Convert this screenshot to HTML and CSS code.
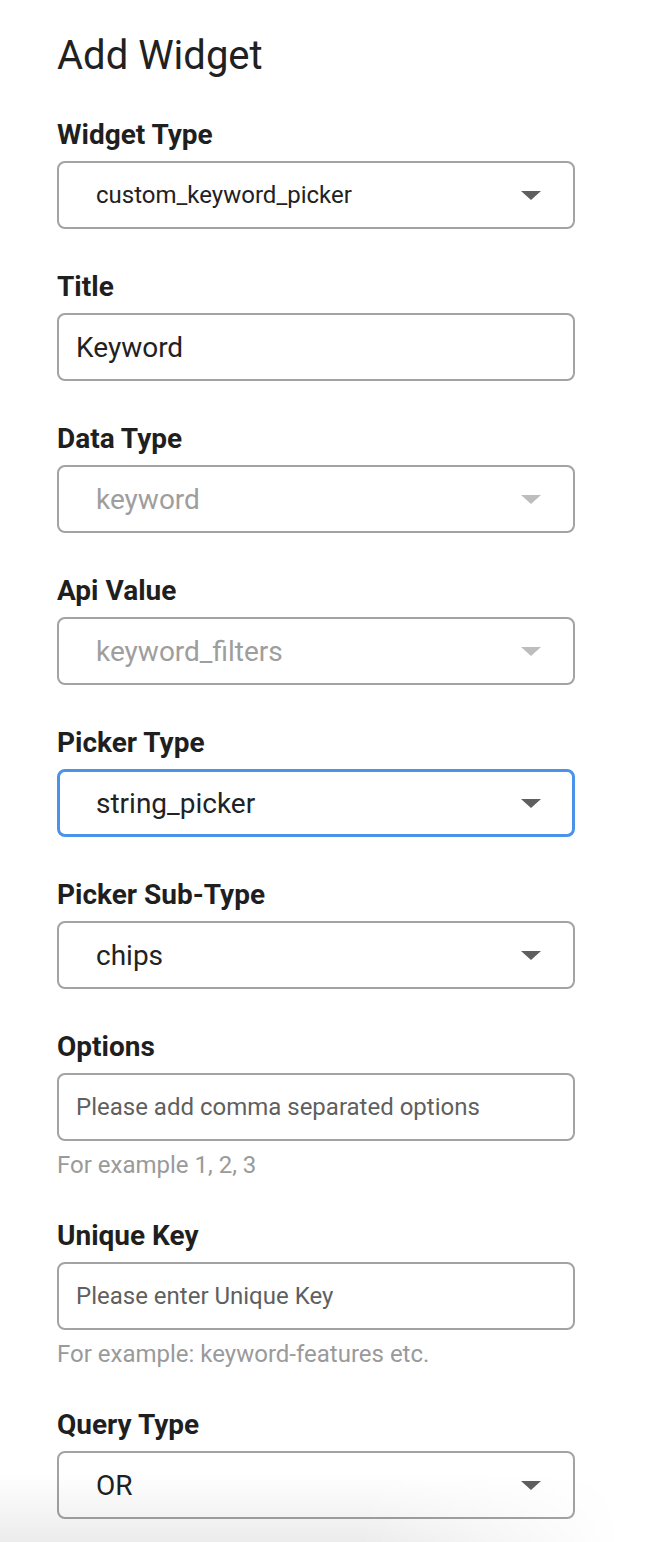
FILE: index.html
```html
<!DOCTYPE html>
<html>
<head>
<meta charset="utf-8">
<link rel="stylesheet" href="styles.css">
</head>
<body>
<div class="panel">
  <h1 class="title">Add Widget</h1>

  <div class="field">
    <div class="label">Widget Type</div>
    <div class="box select"><span class="value small">custom_keyword_picker</span><span class="arrow"></span></div>
  </div>

  <div class="field">
    <div class="label">Title</div>
    <div class="box input"><span class="value">Keyword</span></div>
  </div>

  <div class="field">
    <div class="label">Data Type</div>
    <div class="box select disabled"><span class="value">keyword</span><span class="arrow"></span></div>
  </div>

  <div class="field">
    <div class="label">Api Value</div>
    <div class="box select disabled"><span class="value">keyword_filters</span><span class="arrow"></span></div>
  </div>

  <div class="field">
    <div class="label">Picker Type</div>
    <div class="box select focused"><span class="value">string_picker</span><span class="arrow"></span></div>
  </div>

  <div class="field">
    <div class="label">Picker Sub-Type</div>
    <div class="box select"><span class="value">chips</span><span class="arrow"></span></div>
  </div>

  <div class="field">
    <div class="label">Options</div>
    <div class="box input"><span class="placeholder">Please add comma separated options</span></div>
    <div class="help">For example 1, 2, 3</div>
  </div>

  <div class="field">
    <div class="label">Unique Key</div>
    <div class="box input"><span class="placeholder">Please enter Unique Key</span></div>
    <div class="help">For example: keyword-features etc.</div>
  </div>

  <div class="field">
    <div class="label">Query Type</div>
    <div class="box select"><span class="value">OR</span><span class="arrow"></span></div>
  </div>
</div>
<div class="bottom-shadow"></div>
</body>
</html>
```
FILE: styles.css
```css
* { box-sizing: border-box; }
html, body { margin: 0; padding: 0; background: #fff; }
body {
  font-family: Roboto, "Liberation Sans", Arial, sans-serif;
  color: #212121;
}
.panel {
  padding: 32px 0 0 57px;
  width: 575px;
}
.title {
  margin: 0 0 40px 0;
  font-size: 40px;
  line-height: 48px;
  font-weight: 400;
  color: #212121;
}
.field {
  margin-bottom: 43px;
}
.label {
  font-size: 28px;
  line-height: 30px;
  font-weight: 700;
  color: #1f1f1f;
  margin-bottom: 11px;
}
.box {
  height: 68px;
  width: 518px;
  border: 2px solid #a3a3a3;
  border-radius: 8px;
  display: flex;
  align-items: center;
  font-size: 28px;
}
.input { padding-left: 17px; }
.select { padding-left: 37px; padding-right: 32px; justify-content: space-between; }
.value { color: #222; }
.value.small { font-size: 24px; }
.placeholder { font-size: 24px; color: #5f5f5f; }
.focused { border: 3px solid #4b93ea; padding-left: 36px; padding-right: 31px; }
.disabled .value { color: #9e9e9e; }
.arrow {
  width: 0; height: 0;
  border-left: 10px solid transparent;
  border-right: 10px solid transparent;
  border-top: 9px solid #5f5f5f;
}
.disabled .arrow { border-top-color: #bdbdbd; }
.help {
  margin-top: 11px;
  font-size: 24px;
  line-height: 26px;
  color: #9a9a9a;
}
.bottom-shadow {
  position: fixed;
  left: 0; right: 0; bottom: 0;
  height: 70px;
  pointer-events: none;
  background: linear-gradient(to bottom, rgba(0,0,0,0), rgba(0,0,0,0.075));
  -webkit-mask-image: linear-gradient(to right, #000 0%, #000 55%, rgba(0,0,0,0) 95%);
  mask-image: linear-gradient(to right, #000 0%, #000 55%, rgba(0,0,0,0) 95%);
}
```
